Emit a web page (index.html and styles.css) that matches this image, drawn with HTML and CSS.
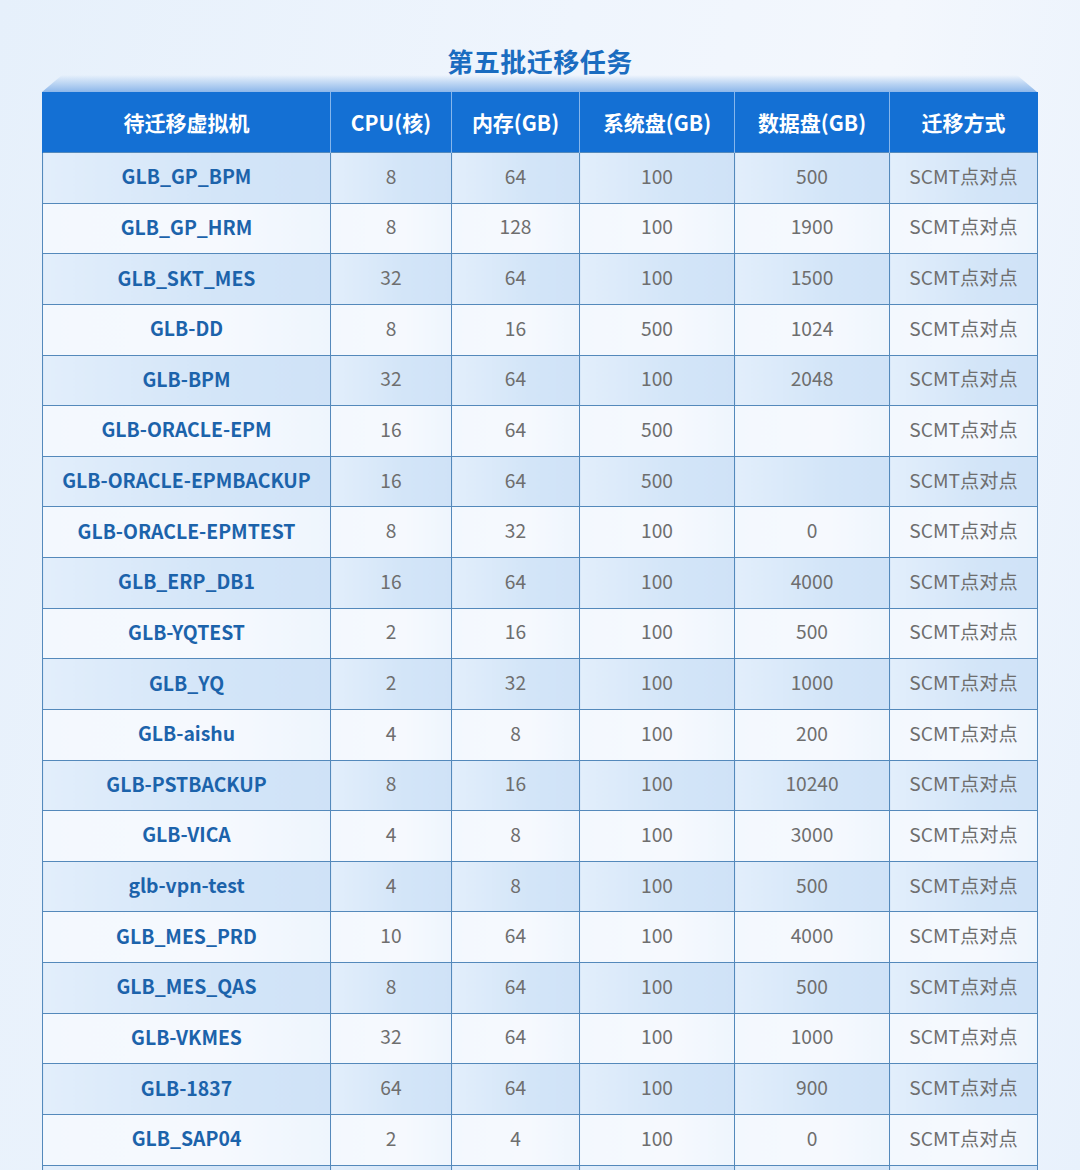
FILE: index.html
```html
<!DOCTYPE html>
<html lang="zh">
<head>
<meta charset="utf-8">
<link rel="stylesheet" href="styles.css">
</head>
<body>
<div class="page">
  <h1 class="title">第五批迁移任务</h1>
  <div class="board">
    <div class="cap"></div>
    <table class="grid">
      <colgroup>
        <col class="c1"><col class="c2"><col class="c3"><col class="c4"><col class="c5"><col class="c6">
      </colgroup>
      <thead>
        <tr><th>待迁移虚拟机</th><th>CPU(核)</th><th>内存(GB)</th><th>系统盘(GB)</th><th>数据盘(GB)</th><th>迁移方式</th></tr>
      </thead>
      <tbody>
        <tr><td class="name">GLB_GP_BPM</td><td>8</td><td>64</td><td>100</td><td>500</td><td>SCMT点对点</td></tr>
        <tr><td class="name">GLB_GP_HRM</td><td>8</td><td>128</td><td>100</td><td>1900</td><td>SCMT点对点</td></tr>
        <tr><td class="name">GLB_SKT_MES</td><td>32</td><td>64</td><td>100</td><td>1500</td><td>SCMT点对点</td></tr>
        <tr><td class="name">GLB-DD</td><td>8</td><td>16</td><td>500</td><td>1024</td><td>SCMT点对点</td></tr>
        <tr><td class="name">GLB-BPM</td><td>32</td><td>64</td><td>100</td><td>2048</td><td>SCMT点对点</td></tr>
        <tr><td class="name">GLB-ORACLE-EPM</td><td>16</td><td>64</td><td>500</td><td></td><td>SCMT点对点</td></tr>
        <tr><td class="name">GLB-ORACLE-EPMBACKUP</td><td>16</td><td>64</td><td>500</td><td></td><td>SCMT点对点</td></tr>
        <tr><td class="name">GLB-ORACLE-EPMTEST</td><td>8</td><td>32</td><td>100</td><td>0</td><td>SCMT点对点</td></tr>
        <tr><td class="name">GLB_ERP_DB1</td><td>16</td><td>64</td><td>100</td><td>4000</td><td>SCMT点对点</td></tr>
        <tr><td class="name">GLB-YQTEST</td><td>2</td><td>16</td><td>100</td><td>500</td><td>SCMT点对点</td></tr>
        <tr><td class="name">GLB_YQ</td><td>2</td><td>32</td><td>100</td><td>1000</td><td>SCMT点对点</td></tr>
        <tr><td class="name">GLB-aishu</td><td>4</td><td>8</td><td>100</td><td>200</td><td>SCMT点对点</td></tr>
        <tr><td class="name">GLB-PSTBACKUP</td><td>8</td><td>16</td><td>100</td><td>10240</td><td>SCMT点对点</td></tr>
        <tr><td class="name">GLB-VICA</td><td>4</td><td>8</td><td>100</td><td>3000</td><td>SCMT点对点</td></tr>
        <tr><td class="name">glb-vpn-test</td><td>4</td><td>8</td><td>100</td><td>500</td><td>SCMT点对点</td></tr>
        <tr><td class="name">GLB_MES_PRD</td><td>10</td><td>64</td><td>100</td><td>4000</td><td>SCMT点对点</td></tr>
        <tr><td class="name">GLB_MES_QAS</td><td>8</td><td>64</td><td>100</td><td>500</td><td>SCMT点对点</td></tr>
        <tr><td class="name">GLB-VKMES</td><td>32</td><td>64</td><td>100</td><td>1000</td><td>SCMT点对点</td></tr>
        <tr><td class="name">GLB-1837</td><td>64</td><td>64</td><td>100</td><td>900</td><td>SCMT点对点</td></tr>
        <tr><td class="name">GLB_SAP04</td><td>2</td><td>4</td><td>100</td><td>0</td><td>SCMT点对点</td></tr>
        <tr><td class="name"></td><td></td><td></td><td></td><td></td><td></td></tr>
      </tbody>
    </table>
  </div>
</div>
</body>
</html>
```

FILE: styles.css
```css
html, body {
  margin: 0;
  padding: 0;
}
body {
  width: 1080px;
  height: 1170px;
  overflow: hidden;
  background: linear-gradient(100deg, #e6f0fb 0%, #eff5fd 45%, #f3f7fd 70%, #e8f1fc 100%);
  font-family: "Noto Sans CJK SC", "Noto Sans", sans-serif;
}
.page {
  padding-top: 43px;
}
.title {
  margin: 0;
  text-align: center;
  font-size: 26px;
  line-height: 36px;
  font-weight: 700;
  color: #1a6cc0;
  letter-spacing: 0.5px;
}
.board {
  margin: -4px 0 0 42px;
  width: 995px;
}
.cap {
  height: 17px;
  background: linear-gradient(180deg, rgba(220, 233, 250, 0) 0%, #b7d2f2 55%, #8db7ea 100%);
  clip-path: polygon(20px 0, 975px 0, 995px 100%, 0 100%);
}
.grid {
  width: 995px;
  border-collapse: collapse;
  table-layout: fixed;
}
.c1 { width: 288px; }
.c2 { width: 121px; }
.c3 { width: 128px; }
.c4 { width: 155px; }
.c5 { width: 155px; }
.c6 { width: 148px; }
.grid th {
  height: 60px;
  padding: 0;
  background: #1470d4;
  color: #ffffff;
  font-size: 21px;
  font-weight: 700;
  border-left: 1px solid #86b6ec;
  border-right: 1px solid #86b6ec;
}
.grid th:first-child { border-left: 1px solid #1470d4; }
.grid th:last-child { border-right: 1px solid #1470d4; }
.grid td {
  height: 45.63px;
  padding: 0 0 4px;
  text-align: center;
  border: 1px solid #5489bb;
  font-size: 19.2px;
  font-weight: 400;
  color: #6e6e6e;
}
.grid tbody tr:nth-child(odd) td {
  background: linear-gradient(90deg, #e2eefb 0%, #d3e5f8 60%, #cfe2f7 100%);
}
.grid tbody tr:nth-child(even) td {
  background: linear-gradient(90deg, #f3f8fe 0%, #f6f9fe 60%, #eef5fd 100%);
}
.grid td.name {
  color: #1c63ab;
  font-weight: 700;
  font-size: 19.4px;
}
```
